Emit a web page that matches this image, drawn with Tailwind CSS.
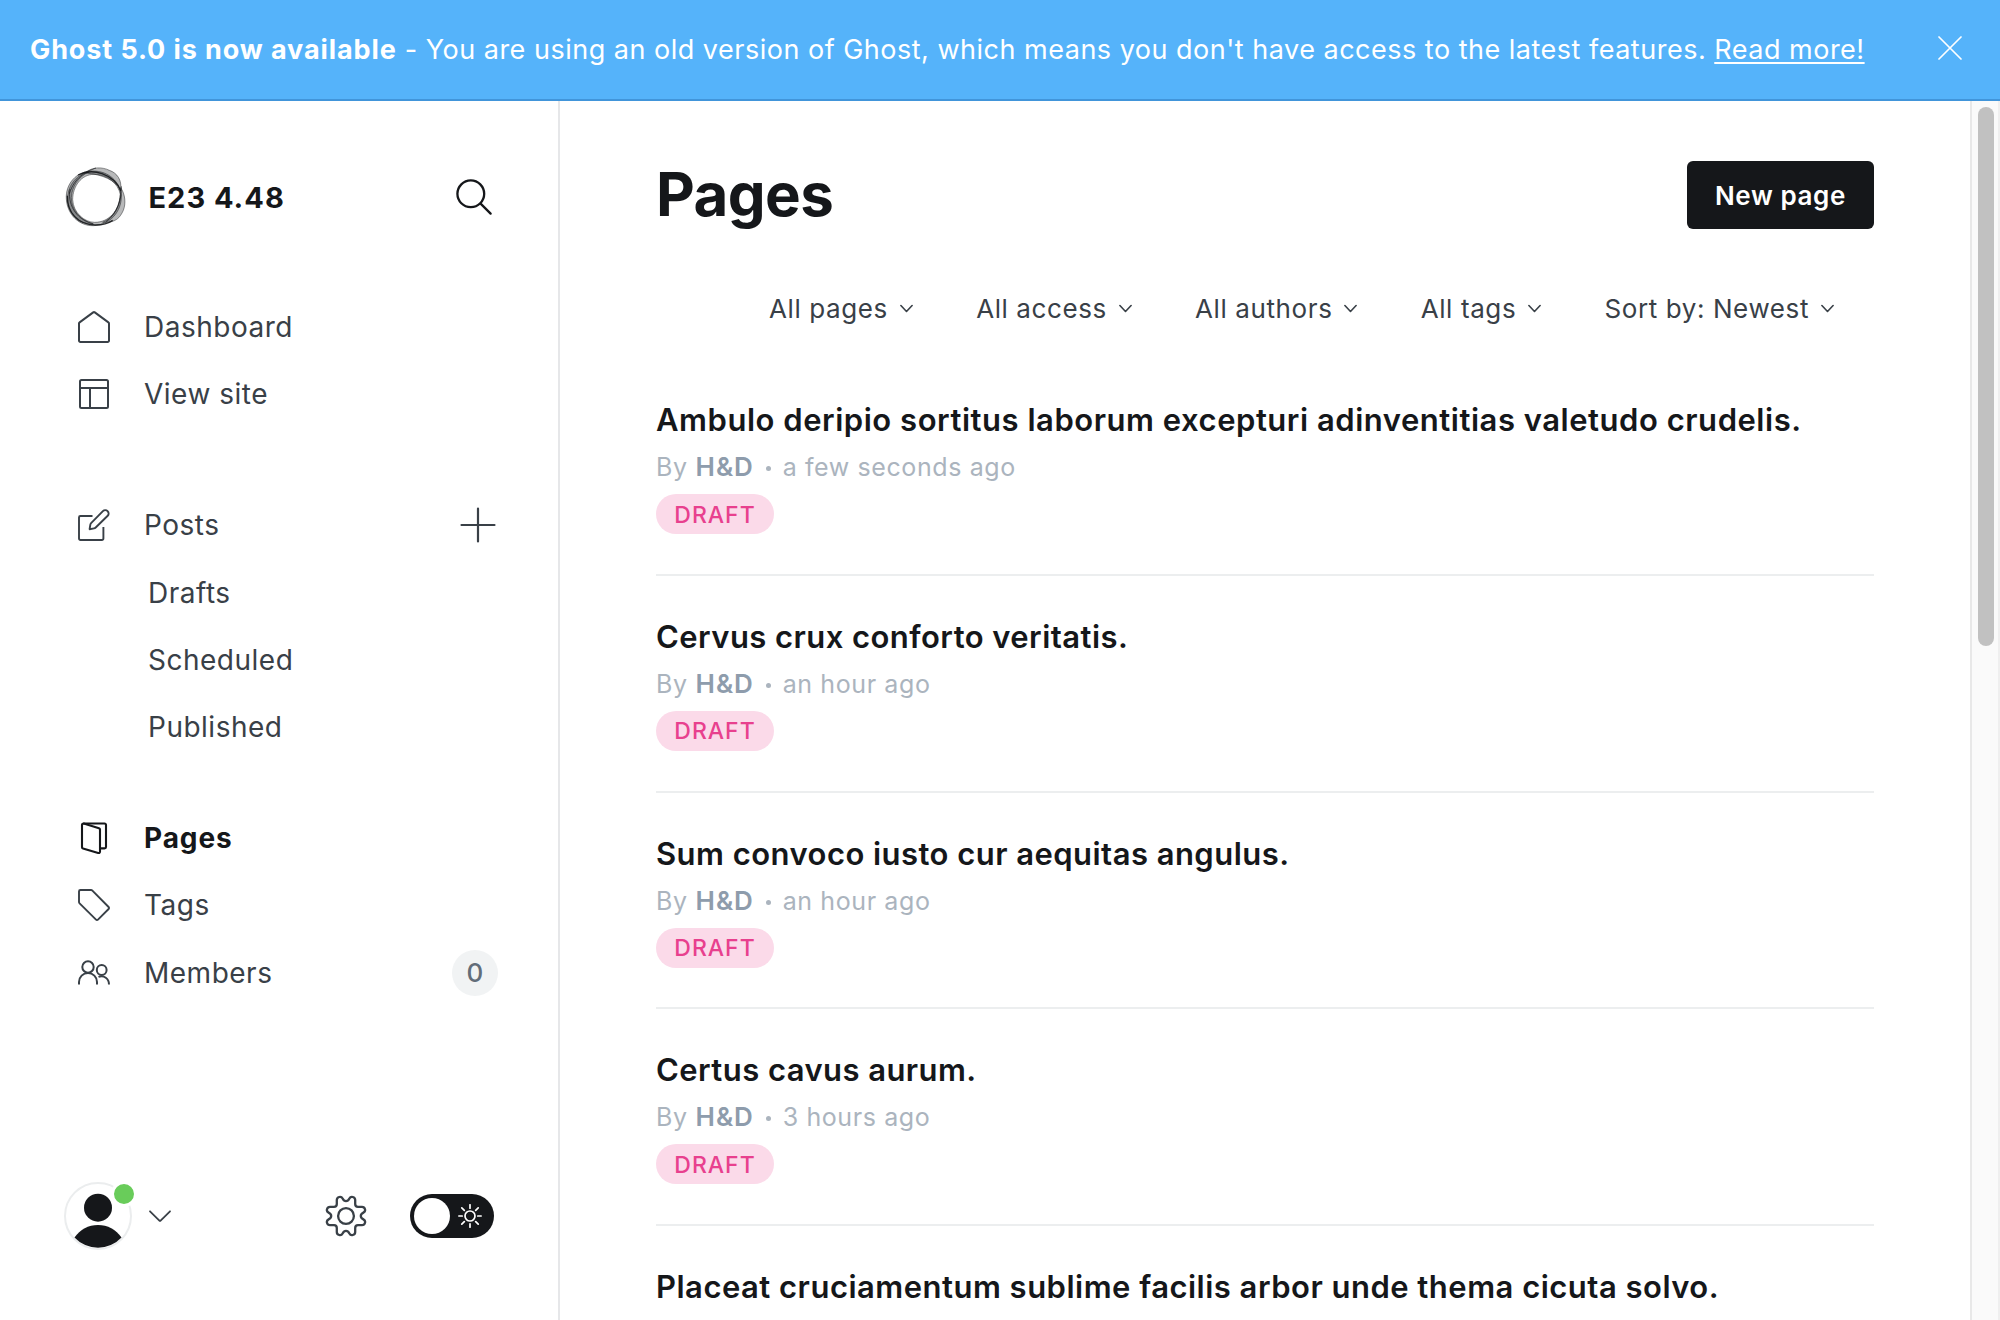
<!DOCTYPE html>
<html lang="en">
<head>
<meta charset="utf-8">
<title>Pages</title>
<script src="https://cdn.jsdelivr.net/npm/@tailwindcss/browser@4"></script>
</head>
<body class="flex h-[1320px] w-[2000px] flex-col overflow-hidden bg-white font-['Inter',sans-serif] text-[#15171a]">

<!-- Upgrade banner -->
<header class="flex h-[101px] shrink-0 items-center justify-between border-b-2 border-[#4195da] bg-[#55b3fa] pr-[38px] pl-[30px] text-[27px] leading-[40px] tracking-[0.5px] text-white">
  <p class="whitespace-nowrap"><b class="tracking-[0.9px]">Ghost 5.0 is now available</b> - You are using an old version of Ghost, which means you don't have access to the latest features. <a class="underline decoration-2 underline-offset-[3px]">Read more!</a></p>
  <svg class="mb-[3px] size-6" viewBox="0 0 24 24" fill="none" stroke="currentColor" stroke-width="1.7" stroke-linecap="round"><path d="M1 1l22 22M23 1L1 23"/></svg>
</header>

<div class="flex min-h-0 flex-1">
  <!-- Sidebar -->
  <nav class="flex w-[560px] shrink-0 flex-col border-r-2 border-[#e6e7e9] pt-[66px] pb-[70px] text-[28px] leading-none tracking-[0.5px] text-[#394047]">
    <div class="flex h-[60px] items-center pr-[66px] pl-[65px] text-[#15171a]">
      <svg class="h-[60px] w-[61px]" viewBox="27 26 183 180" fill="none" stroke="#15171a">
        <g fill="#15171a" fill-rule="evenodd" fill-opacity=".3" stroke-opacity=".7" stroke-width="2">
          <path d="M110 38C60 38 28 78 31 122C34 170 70 203 112 202C162 200 198 160 196 110C190 70 160 38 110 38ZM114 48C76 48 50 84 50 124C52 164 86 192 116 192C160 192 190 156 193 108C186 76 156 48 114 48Z"/>
          <path d="M86 44C110 24 140 26 160 36C184 44 198 66 194 94C176 66 142 48 86 44Z"/>
          <path d="M194 88C208 108 210 136 202 156C192 178 180 194 140 192C176 176 194 144 194 88Z"/>
          <path d="M100 40C60 48 30 86 36 130C40 168 64 196 112 198C70 184 46 152 46 118C48 84 66 56 100 40Z"/>
        </g>
        <path stroke-width="4" stroke-opacity=".9" d="M66 50C90 38 116 38 138 46C166 56 186 74 194 98M34 112C32 160 66 200 118 200C140 200 156 196 170 186"/>
        <path stroke-width="2.5" stroke-opacity=".8" d="M42 92C34 132 56 184 112 196M120 29C90 40 56 56 40 106M196 84C198 122 184 166 150 190"/>
      </svg>
      <span class="ml-[22.5px] text-[29px] font-bold tracking-[1px]">E23 4.48</span>
      <svg class="ml-auto size-9" viewBox="0 0 36 36" fill="none" stroke="currentColor" stroke-width="2.3" stroke-linecap="round"><circle cx="14.8" cy="14.8" r="13.4"/><path d="M24.6 24.6L34.6 34.6"/></svg>
    </div>

    <ul class="mt-[66.3px]">
      <li class="flex h-[67.3px] items-center pl-[78px]">
        <svg class="size-8" viewBox="0 0 32 32" fill="none" stroke="currentColor" stroke-width="2" stroke-linejoin="round"><path d="M1 12.5V29.6A1.4 1.4 0 0 0 2.4 31H29.6A1.4 1.4 0 0 0 31 29.6V12.5a1.4 1.4 0 0 0-.6-1.1L16.8 1.4a1.4 1.4 0 0 0-1.6 0L1.6 11.4a1.4 1.4 0 0 0-.6 1.1Z"/></svg>
        <span class="ml-[34px]">Dashboard</span>
      </li>
      <li class="flex h-[67.3px] items-center pl-[78px]">
        <svg class="size-8" viewBox="0 0 32 32" fill="none" stroke="currentColor" stroke-width="2"><rect x="2" y="2" width="28" height="28" rx="1.5"/><path d="M2 10h28M12 10v20"/></svg>
        <span class="ml-[34px]">View site</span>
      </li>
    </ul>

    <ul class="mt-[63.4px]">
      <li class="flex h-[67.3px] items-center pr-[62px] pl-[78px]">
        <svg class="size-8" viewBox="0 0 32 32" fill="none" stroke="currentColor" stroke-width="1.9" stroke-linejoin="round"><path d="M14.5 7H2.4A1.4 1.4 0 0 0 1 8.4V29.6A1.4 1.4 0 0 0 2.4 31H24a1.4 1.4 0 0 0 1.4-1.4V18"/><path d="M11.6 20.2l.7-4.4c.1-.6.4-1.200.8-1.6L24.9 2.2a3.3 3.3 0 0 1 4.8 4.6L17.7 18.5c-.5.5-1 .8-1.7.9Z"/></svg>
        <span class="ml-[34px]">Posts</span>
        <svg class="ml-auto size-9" viewBox="0 0 36 36" fill="none" stroke="currentColor" stroke-width="2.2" stroke-linecap="round"><path d="M18 1.500v33M1.500 18h33"/></svg>
      </li>
      <li class="flex h-[67.3px] items-center pt-px pl-[148px]">Drafts</li>
      <li class="flex h-[67.3px] items-center pl-[148px]">Scheduled</li>
      <li class="flex h-[67.3px] items-center pl-[148px]">Published</li>
    </ul>

    <ul class="mt-[43.8px]">
      <li class="flex h-[67.3px] items-center pl-[78px] font-bold text-[#15171a]">
        <svg class="size-8" viewBox="0 0 32 32" fill="none" stroke="currentColor" stroke-width="2.1" stroke-linejoin="round"><path d="M4 2.9V25.3a1.4 1.4 0 0 0 1 1.3L20.2 31a1.4 1.4 0 0 0 1.800-1.3V7.6a1.4 1.4 0 0 0-1-1.3L5.7 1.6A1.4 1.4 0 0 0 4 2.9Z"/><path d="M5.3 1.5H26.6A1.4 1.4 0 0 1 28 2.9V25a1.4 1.4 0 0 1-1.4 1.4H22"/></svg>
        <span class="ml-[34px] tracking-[0.9px]">Pages</span>
      </li>
      <li class="flex h-[67.3px] items-center pl-[78px]">
        <svg class="size-8" viewBox="0 0 32 32" fill="none" stroke="currentColor" stroke-width="1.9" stroke-linejoin="round"><path d="M2.4 1H13a2 2 0 0 1 1.4.6L30.6 18a1.4 1.4 0 0 1 0 2L20 30.6a1.4 1.4 0 0 1-2 0L1.6 14.4A2 2 0 0 1 1 13V2.4A1.4 1.4 0 0 1 2.4 1Z"/></svg>
        <span class="ml-[34px]">Tags</span>
      </li>
      <li class="flex h-[67.3px] items-center pr-[60px] pl-[78px]">
        <svg class="size-8" viewBox="0 0 32 32" fill="none" stroke="currentColor" stroke-width="2"><circle cx="10" cy="10" r="5.7"/><path d="M1 27.500V25a9 9 0 0 1 18 0V27.500"/><circle cx="23.7" cy="13" r="4.9"/><path d="M20.5 19.9C26 18 31 21.5 31 27.5"/></svg>
        <span class="ml-[34px]">Members</span>
        <span class="ml-auto flex size-[46px] items-center justify-center rounded-full bg-[#f1f3f4] text-[26px] font-medium tracking-normal text-[#626d79]">0</span>
      </li>
    </ul>

    <div class="mt-auto flex h-[68px] items-center pr-[64px] pl-[64px]">
      <div class="relative size-[68px]">
        <svg class="size-[68px]" viewBox="0 0 68 68"><circle cx="34" cy="34" r="33" fill="#fff" stroke="#ebedee" stroke-width="2"/><circle cx="34" cy="25.7" r="14" fill="#15171a"/><path fill="#15171a" d="M10.5 55.5C16 47.5 24.5 43 34 43S52 47.5 57.5 55.5A32 32 0 0 1 10.5 55.5Z"/></svg>
        <span class="absolute -top-px -right-[5px] box-content size-5 rounded-full border-[3px] border-white bg-[#69cc5a]"></span>
      </div>
      <svg class="ml-[16px] h-[14px] w-6" viewBox="0 0 24 14" fill="none" stroke="currentColor" stroke-width="1.8" stroke-linecap="round" stroke-linejoin="round"><path d="M2 2.3L11.4 11.7a.8.8 0 0 0 1.2 0L22 2.3"/></svg>
      <svg class="ml-auto size-[42px]" viewBox="-21 -21 42 42" fill="none" stroke="currentColor" stroke-width="2.3">
        <circle r="7.9"/>
        <path id="tooth" d="M0-14.8C1.6-14.8 2.6-15.8 3.4-17.4C4.1-18.8 5.4-19.4 6.8-19C8.6-18.5 9.2-17.6 9.2-16L9.2-12C9.2-10.2 10.2-9.2 12-9.2L16-9.2C17.6-9.2 18.5-8.6 19-6.8C19.4-5.4 18.8-4.1 17.4-3.4C15.8-2.6 14.8-1.6 14.8 0"/>
        <use href="#tooth" transform="rotate(90)"/><use href="#tooth" transform="rotate(180)"/><use href="#tooth" transform="rotate(270)"/>
      </svg>
      <div class="ml-[43px] flex h-[44px] w-[84px] items-center justify-between rounded-full bg-[#15171a] pr-3 pl-1">
        <span class="size-9 rounded-full bg-white"></span>
        <svg class="size-6 text-white" viewBox="-12 -12 24 24" fill="none" stroke="currentColor" stroke-width="1.7" stroke-linecap="round"><circle r="5"/><path d="M0-11.2V-7.8M0 11.2V7.8M-11.2 0H-7.8M11.2 0H7.8M-8.2-8.2L-5.7-5.7M8.2-8.2L5.7-5.7M-8.2 8.2L-5.7 5.7M8.2 8.2L5.7 5.7"/></svg>
      </div>
    </div>
  </nav>

  <!-- Page list -->
  <main class="flex-1 overflow-hidden px-24 pt-[60px]">
    <div class="flex h-[68px] items-center justify-between">
      <h1 class="pb-[2px] text-[60px] leading-none font-bold tracking-[-0.6px]">Pages</h1>
      <button class="flex h-[68px] w-[187px] items-center justify-center rounded-md bg-[#15171a] text-[26px] font-semibold tracking-[0.6px] text-white">New page</button>
    </div>

    <div class="mt-[59.5px] flex h-10 items-center justify-end gap-[63.2px] pr-[40px] text-[26px] leading-none tracking-[0.6px] whitespace-nowrap text-[#394047]">
      <div class="flex items-center gap-3">All pages<svg class="h-[9px] w-[13px]" viewBox="0 0 13 9" fill="none" stroke="currentColor" stroke-width="1.6" stroke-linecap="round" stroke-linejoin="round"><path d="M.9 1.5L6.5 7.500L12.100 1.5"/></svg></div>
      <div class="flex items-center gap-3">All access<svg class="h-[9px] w-[13px]" viewBox="0 0 13 9" fill="none" stroke="currentColor" stroke-width="1.6" stroke-linecap="round" stroke-linejoin="round"><path d="M.9 1.5L6.5 7.500L12.100 1.5"/></svg></div>
      <div class="flex items-center gap-3">All authors<svg class="h-[9px] w-[13px]" viewBox="0 0 13 9" fill="none" stroke="currentColor" stroke-width="1.6" stroke-linecap="round" stroke-linejoin="round"><path d="M.9 1.5L6.5 7.500L12.100 1.5"/></svg></div>
      <div class="flex items-center gap-3">All tags<svg class="h-[9px] w-[13px]" viewBox="0 0 13 9" fill="none" stroke="currentColor" stroke-width="1.6" stroke-linecap="round" stroke-linejoin="round"><path d="M.9 1.5L6.5 7.500L12.100 1.5"/></svg></div>
      <div class="flex items-center gap-3">Sort by: Newest<svg class="h-[9px] w-[13px]" viewBox="0 0 13 9" fill="none" stroke="currentColor" stroke-width="1.6" stroke-linecap="round" stroke-linejoin="round"><path d="M.9 1.5L6.5 7.500L12.100 1.5"/></svg></div>
    </div>

    <ol class="mt-[30.8px] text-[25px] tracking-[0.6px] whitespace-nowrap text-[#abb4be]">
      <li class="h-[216.67px] border-b-2 border-[#eceeef] pt-[40px]">
        <h3 class="text-[31px] leading-[42px] font-semibold tracking-[0.53px] text-[#15171a]">Ambulo deripio sortitus laborum excepturi adinventitias valetudo crudelis.</h3>
        <p class="mt-[9px] flex h-[34px] items-center leading-[34px]">By <span class="ml-[8px] text-[26px] font-semibold tracking-[0.9px] text-[#8e9cac]">H&amp;D</span><span class="mt-[3px] mr-[12px] ml-[12px] size-[5px] rounded-full bg-current"></span>a few seconds ago</p>
        <span class="mt-[10px] flex h-10 w-[118px] items-center justify-center rounded-full bg-[#fbdae9] pt-px text-[23px] font-medium tracking-[1px] text-[#e8408e]">DRAFT</span>
      </li>
      <li class="h-[216.67px] border-b-2 border-[#eceeef] pt-[40px]">
        <h3 class="text-[31px] leading-[42px] font-semibold tracking-[0.44px] text-[#15171a]">Cervus crux conforto veritatis.</h3>
        <p class="mt-[9px] flex h-[34px] items-center leading-[34px]">By <span class="ml-[8px] text-[26px] font-semibold tracking-[0.9px] text-[#8e9cac]">H&amp;D</span><span class="mt-[3px] mr-[12px] ml-[12px] size-[5px] rounded-full bg-current"></span>an hour ago</p>
        <span class="mt-[10px] flex h-10 w-[118px] items-center justify-center rounded-full bg-[#fbdae9] pt-px text-[23px] font-medium tracking-[1px] text-[#e8408e]">DRAFT</span>
      </li>
      <li class="h-[216.67px] border-b-2 border-[#eceeef] pt-[40px]">
        <h3 class="text-[31px] leading-[42px] font-semibold tracking-[0.46px] text-[#15171a]">Sum convoco iusto cur aequitas angulus.</h3>
        <p class="mt-[9px] flex h-[34px] items-center leading-[34px]">By <span class="ml-[8px] text-[26px] font-semibold tracking-[0.9px] text-[#8e9cac]">H&amp;D</span><span class="mt-[3px] mr-[12px] ml-[12px] size-[5px] rounded-full bg-current"></span>an hour ago</p>
        <span class="mt-[10px] flex h-10 w-[118px] items-center justify-center rounded-full bg-[#fbdae9] pt-px text-[23px] font-medium tracking-[1px] text-[#e8408e]">DRAFT</span>
      </li>
      <li class="h-[216.67px] border-b-2 border-[#eceeef] pt-[40px]">
        <h3 class="text-[31px] leading-[42px] font-semibold tracking-[0.44px] text-[#15171a]">Certus cavus aurum.</h3>
        <p class="mt-[9px] flex h-[34px] items-center leading-[34px]">By <span class="ml-[8px] text-[26px] font-semibold tracking-[0.9px] text-[#8e9cac]">H&amp;D</span><span class="mt-[3px] mr-[12px] ml-[12px] size-[5px] rounded-full bg-current"></span>3 hours ago</p>
        <span class="mt-[10px] flex h-10 w-[118px] items-center justify-center rounded-full bg-[#fbdae9] pt-px text-[23px] font-medium tracking-[1px] text-[#e8408e]">DRAFT</span>
      </li>
      <li class="pt-[40px]">
        <h3 class="text-[31px] leading-[42px] font-semibold tracking-[0.49px] text-[#15171a]">Placeat cruciamentum sublime facilis arbor unde thema cicuta solvo.</h3>
      </li>
    </ol>
  </main>

  <!-- Scrollbar -->
  <div class="w-[30px] shrink-0 border-x-2 border-[#e8e8e8] border-r-[#efefef] bg-[#fafafa] pt-[6px] pl-[6px]">
    <div class="h-[539px] w-4 rounded-full bg-[#c1c1c1]"></div>
  </div>
</div>
</body>
</html>
